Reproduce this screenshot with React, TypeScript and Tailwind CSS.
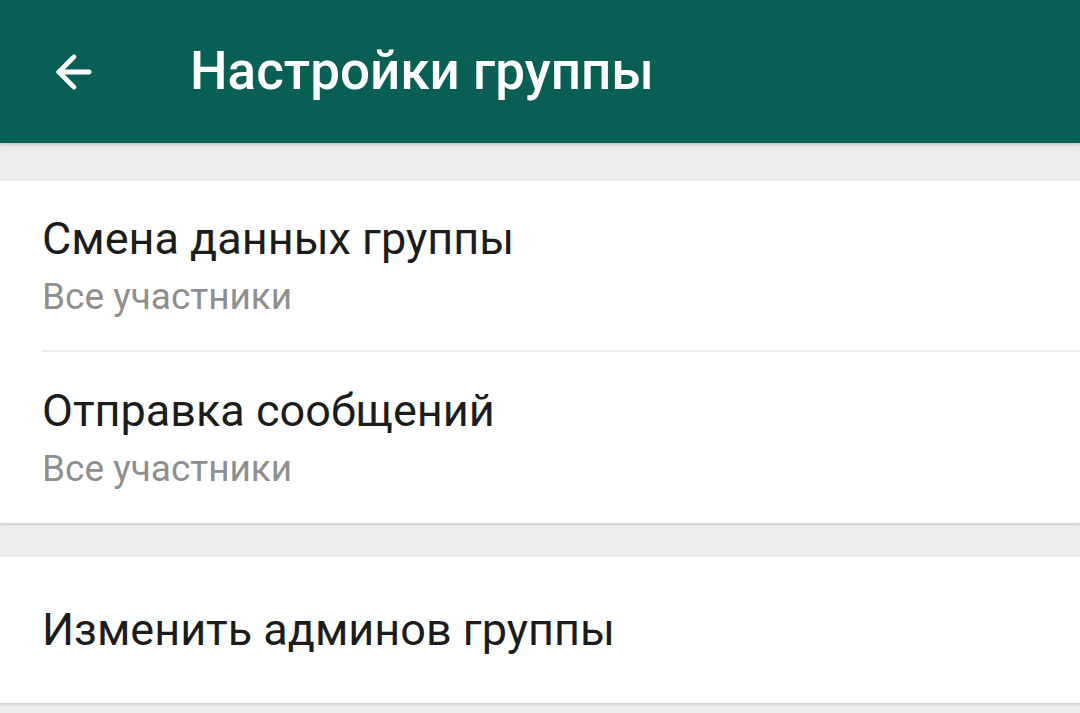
import { ArrowLeft } from "lucide-react";

const font = { fontFamily: "Roboto, 'Noto Sans', sans-serif" };

function Row({ title, subtitle, divider }: { title: string; subtitle: string; divider?: boolean }) {
  return (
    <div className="pl-[42px]">
      <div className={`h-[171px] flex flex-col justify-center ${divider ? "border-b-2 border-[#ececec]" : ""}`}>
        <div className="text-[45px] leading-[54px] text-[#1c1c1c]">{title}</div>
        <div className="text-[37px] leading-[46px] text-[#8f8f8f] mt-[8px]">{subtitle}</div>
      </div>
    </div>
  );
}

export default function App() {
  return (
    <div className="w-[1080px] h-[713px] bg-[#ececec] overflow-hidden" style={font}>
      <div className="h-[143px] bg-[#0a5f55] flex items-center shadow-[0_2px_3px_rgba(0,0,0,0.15)] relative">
        <ArrowLeft className="ml-[48px] text-white" size={52} strokeWidth={2.2} />
        <h1 className="ml-[90px] text-white text-[53px] font-medium">Настройки группы</h1>
      </div>

      <div className="mt-[38px] bg-white shadow-[0_2px_2px_rgba(0,0,0,0.12)]">
        <Row title="Смена данных группы" subtitle="Все участники" divider />
        <Row title="Отправка сообщений" subtitle="Все участники" />
      </div>

      <div className="mt-[34px] bg-white h-[146px] flex items-center pl-[42px] shadow-[0_2px_2px_rgba(0,0,0,0.12)]">
        <div className="text-[45px] text-[#1c1c1c]">Изменить админов группы</div>
      </div>
    </div>
  );
}
